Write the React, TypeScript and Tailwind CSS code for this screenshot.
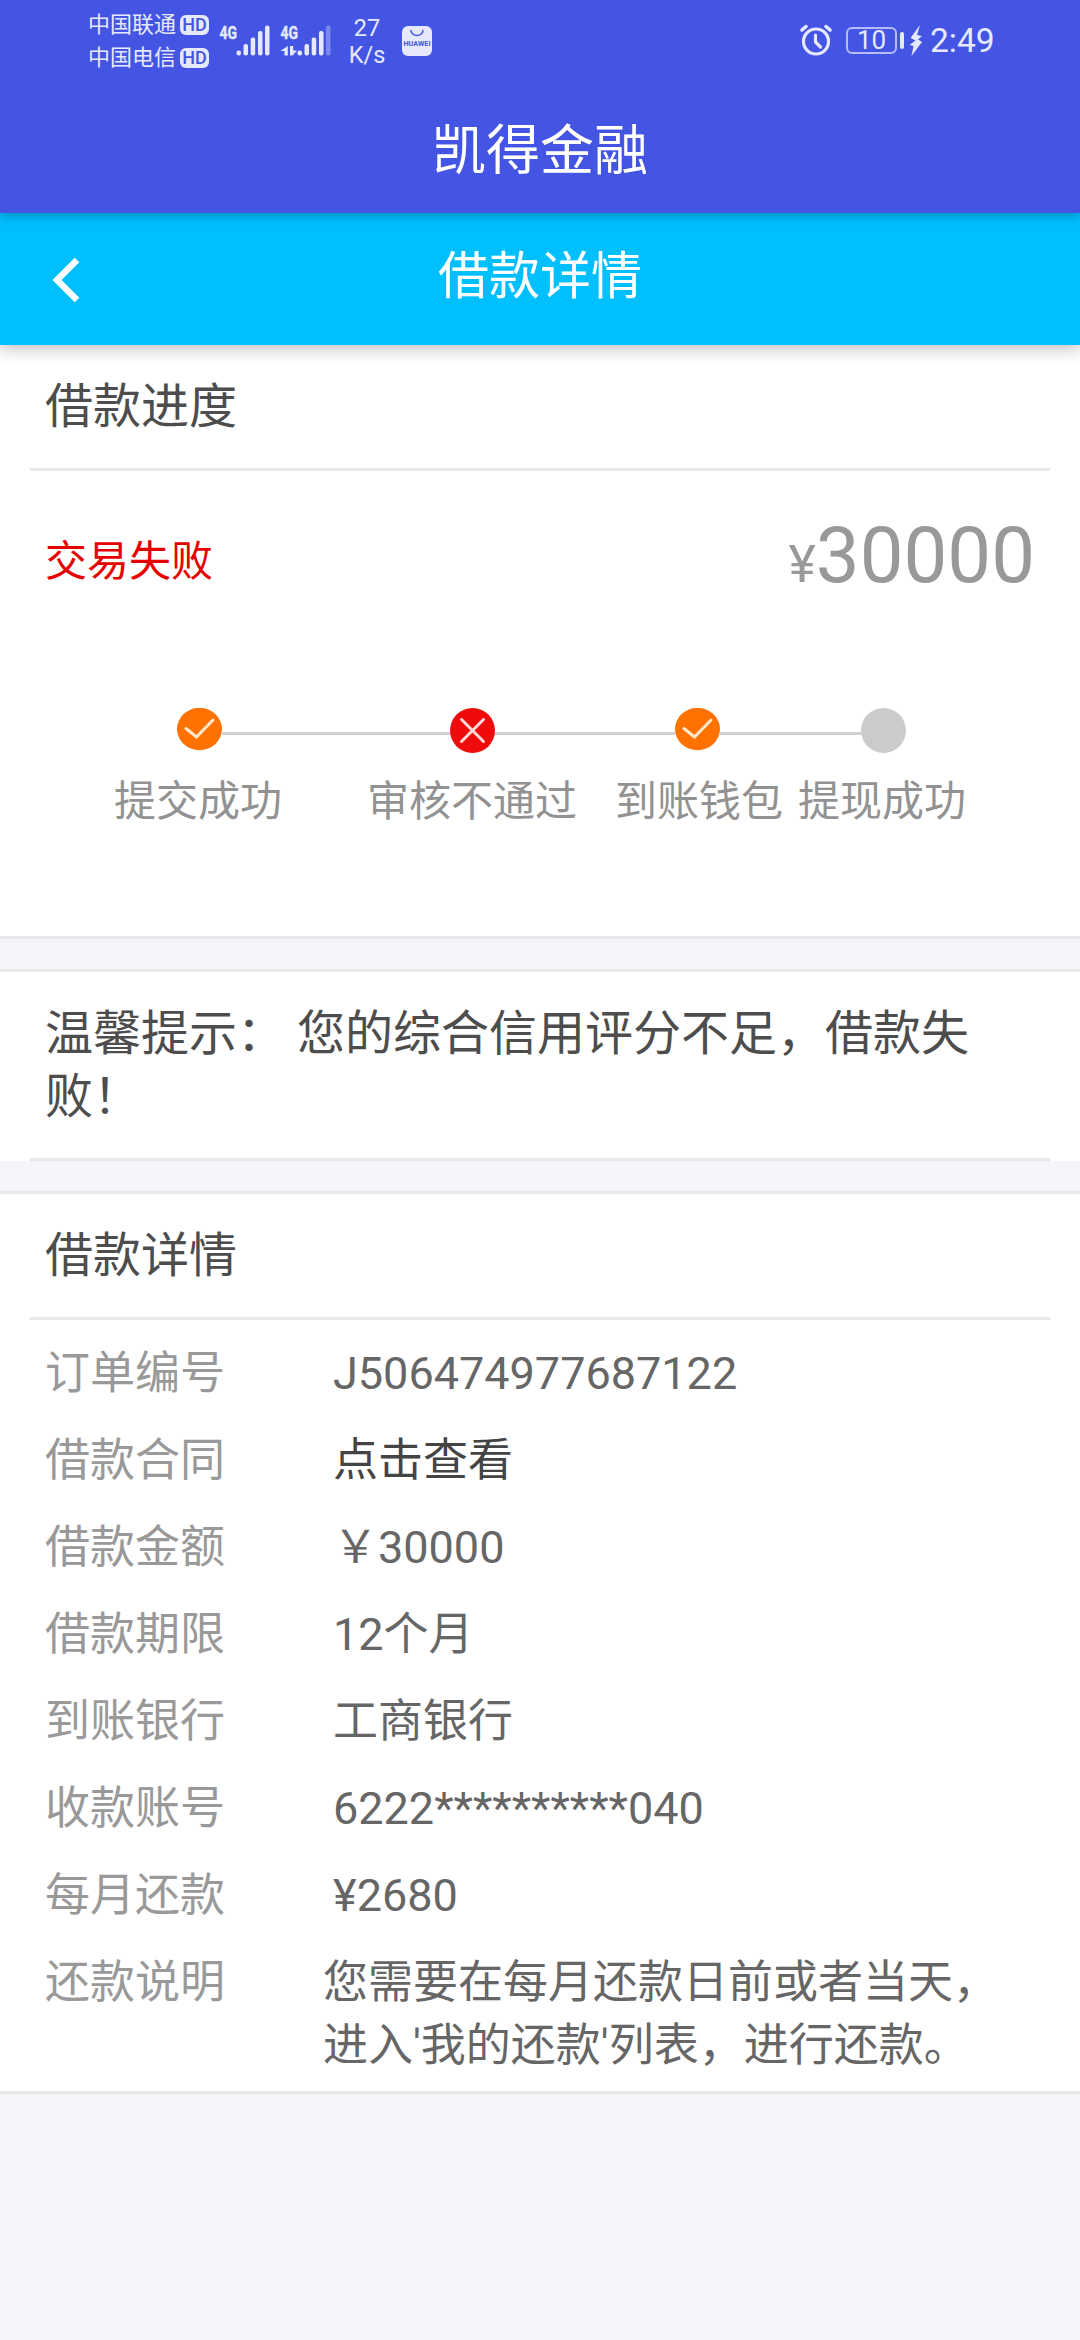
import type { ReactNode } from "react";

type StepStatus = "done" | "failed" | "pending";

const details = [
  { label: "订单编号", value: "J506474977687122" },
  { label: "借款合同", value: "点击查看", link: true },
  { label: "借款金额", value: "￥30000" },
  { label: "借款期限", value: "12个月" },
  { label: "到账银行", value: "工商银行" },
  { label: "收款账号", value: "6222**********040" },
  { label: "每月还款", value: "¥2680" },
];

const Carrier = ({ name }: { name: string }) => (
  <div className="flex h-[33px] items-center">
    <span className="w-[92px] text-[22px] leading-[33px]">{name}</span>
    <span className="flex h-5 w-[29px] items-center justify-center rounded-md bg-[#e6e9fd] text-[18px] font-medium leading-5 text-[#4455e4]">
      HD
    </span>
  </div>
);

const Signal = ({ data }: { data?: boolean }) => (
  <svg width="52" height="42" viewBox="0 -8 52 42" fill="#e6e9fd">
    <text
      x="0.500"
      y="14.500"
      fontSize="18.500"
      fontWeight="700"
      textLength="17.500"
      lengthAdjust="spacingAndGlyphs"
      stroke="#e6e9fd"
      strokeWidth="0.400"
    >
      4G
    </text>
    {data && (
      <>
        <path d="M7.800 22v9.500H4.500V27H0.500z" />
        <path d="M10 22v9.500h2.500L17 26.500h-3.800V22z" />
      </>
    )}
    <rect x="17.500" y="26.500" width="4.500" height="5" rx="2" />
    <rect x="24.500" y="20" width="4.500" height="11.500" rx="2" />
    <rect x="31.700" y="13.500" width="4.500" height="18" rx="2" />
    <rect x="39" y="7" width="4.500" height="24.500" rx="2" />
    <rect x="46" y="1.500" width="4.500" height="30" rx="2" opacity={data ? 0.35 : 1} />
  </svg>
);

const StatusBar = () => (
  <div className="flex h-20 text-[#e6e9fd]">
    <div className="ml-[88px] mt-2 w-[131px]">
      <Carrier name="中国联通" />
      <Carrier name="中国电信" />
    </div>
    <div className="mt-4 flex gap-[9px]">
      <Signal />
      <Signal data />
    </div>
    <div className="ml-[11px] mt-[15px] w-[48px] text-center text-[23.500px] leading-[27px]">
      <p>27</p>
      <p>K/s</p>
    </div>
    {/* App store icon */}
    <svg className="ml-[11px] mt-[26px]" width="30" height="30" viewBox="0 0 30 30">
      <rect width="30" height="30" rx="6" fill="#e6e9fd" />
      <path d="M9 4.500a6 5 0 0 0 12 0" fill="none" stroke="#4455e4" strokeWidth="1.500" strokeLinecap="round" />
      <text x="1.500" y="20" fontSize="6.500" fontWeight="700" fill="#4455e4" textLength="27" lengthAdjust="spacingAndGlyphs">
        HUAWEI
      </text>
    </svg>
    {/* Alarm */}
    <svg className="ml-auto mt-[24px]" width="32" height="32" viewBox="0 0 32 32" fill="none" stroke="#e6e9fd">
      <circle cx="16" cy="17.500" r="12.500" strokeWidth="3.200" />
      <path d="M15.500 11v7l5 5" strokeWidth="3.200" strokeLinecap="round" />
      <path d="M2 6l4-3.500M30 6l-4-3.500" strokeWidth="3.500" strokeLinecap="round" />
    </svg>
    <div className="ml-[14px] mt-[27px] flex h-[27px] w-[51px] items-center justify-center rounded-[6px] border-2 border-[#b5bcf6] text-[26px] leading-[27px]">
      10
    </div>
    <div className="ml-[3px] mt-8 h-[17px] w-1 rounded-sm bg-[#e6e9fd]" />
    <svg className="ml-[5px] mt-[25px]" width="14" height="31" viewBox="0 0 14 31" fill="#e6e9fd">
      <path d="M11 0L1.500 13l5 2.500L.5 20l4 1L2.500 31 13 17l-4-2.500 4-3.500-5-1z" />
    </svg>
    <span className="ml-[7px] mr-[86px] mt-[21px] w-[64px] text-[33.500px] leading-10">2:49</span>
  </div>
);

const StepIcon = ({ status }: { status: StepStatus }) => {
  if (status === "done") {
    return (
      <svg width="45" height="45" viewBox="0 0 45 45" fill="none">
        <ellipse cx="22.500" cy="21" rx="22.500" ry="21.200" fill="#ff7200" />
        <path d="M9 20.500l10.500 8.500L36 12" stroke="#ffe9cc" strokeWidth="3" strokeLinecap="round" />
      </svg>
    );
  }
  if (status === "failed") {
    return (
      <svg width="45" height="45" viewBox="0 0 45 45" fill="none">
        <circle cx="22.500" cy="22.500" r="22.500" fill="#f00b0b" />
        <path d="M11.500 11.500l22 22M33.500 11.500l-22 22" stroke="#ffd9d9" strokeWidth="3" strokeLinecap="round" />
      </svg>
    );
  }
  return <div className="h-[45px] w-[45px] rounded-full bg-[#cbcbcb]" />;
};

const Line = ({ className }: { className: string }) => (
  <div className={`mt-6 h-[3px] bg-[#d1d1d1] ${className}`} />
);

const SectionTitle = ({ children }: { children: ReactNode }) => (
  <h2 className="mx-[30px] h-[126px] border-b-[3px] border-[#e8e8e8] pl-[15px] pt-[30px] text-[48px] leading-[63px] text-[#4d4d4d]">
    {children}
  </h2>
);

export default function App() {
  return (
    <div className="min-h-[2340px] w-[1080px] bg-[#f4f4f9] font-[Roboto,'Noto_Sans_CJK_SC',sans-serif]">
      {/* App bar */}
      <header className="relative z-20 h-[213px] bg-[#4455e4] shadow-[0_2px_10px_rgba(0,0,0,0.3)]">
        <StatusBar />
        <h1 className="pt-[40px] text-center text-[54px] leading-[64px] text-white">凯得金融</h1>
      </header>

      {/* Page bar */}
      <nav className="relative z-10 flex h-[132px] items-center bg-[#00bfff] text-white shadow-[0_3px_16px_rgba(0,0,0,0.28)]">
        <svg className="ml-[51px] mt-[1px]" width="30" height="46" viewBox="0 0 30 46" fill="none">
          <path d="M26 3L6 23l20 20" stroke="#fff" strokeWidth="6.500" />
        </svg>
        <h2 className="mb-1 mr-[81px] flex-1 text-center text-[51px] leading-[60px]">借款详情</h2>
      </nav>

      {/* Progress */}
      <section className="h-[594px] border-b-[3px] border-[#e8e8e8] bg-white">
        <SectionTitle>借款进度</SectionTitle>
        <div className="flex h-[170px] items-start justify-between px-[45px]">
          <span className="pt-[59px] text-[42px] leading-[63px] text-[#e60000]">交易失败</span>
          <span className="pt-[39px] text-[52px] leading-[92px] text-[#999]">
            ¥<span className="text-[78px]">30000</span>
          </span>
        </div>
        <div className="ml-[177px] mt-[67px] flex">
          <StepIcon status="done" />
          <Line className="w-[228px]" />
          <StepIcon status="failed" />
          <Line className="w-[180px]" />
          <StepIcon status="done" />
          <Line className="w-[141px]" />
          <StepIcon status="pending" />
        </div>
        <div className="ml-[114px] mt-[17px] flex text-[42px] leading-[63px] text-[#929292]">
          <span className="mr-[85px]">提交成功</span>
          <span className="mr-[38px]">审核不通过</span>
          <span className="mr-[15px]">到账钱包</span>
          <span>提现成功</span>
        </div>
      </section>

      {/* Notice */}
      <section className="mt-[30px] h-[192px] border-t-[3px] border-[#e8e8e8] bg-white">
        <p className="mx-[30px] h-[189px] border-b-[3px] border-[#e8e8e8] px-[15px] pt-[30px] text-[48px] leading-[63px] text-[#4d4d4d]">
          温馨提示： 您的综合信用评分不足，借款失败！
        </p>
      </section>

      {/* Loan details */}
      <section className="mt-[30px] border-y-[3px] border-[#e8e8e8] bg-white pb-[2px]">
        <SectionTitle>借款详情</SectionTitle>
        <div className="pt-[10px] text-[45px] leading-[63px]">
          {details.map((item) => (
            <div key={item.label} className="flex py-3 pl-[45px]">
              <span className="w-[288px] text-[#999]">{item.label}</span>
              <span className={item.link ? "text-[#444]" : "text-[#666]"}>{item.value}</span>
            </div>
          ))}
          <div className="flex py-3 pl-[45px]">
            <span className="w-[278px] text-[#999]">还款说明</span>
            <p className="w-[680px] text-[#666]">
              您需要在每月还款日前或者当天，
              <br />
              进入'我的还款'列表，进行还款。
            </p>
          </div>
        </div>
      </section>
    </div>
  );
}
